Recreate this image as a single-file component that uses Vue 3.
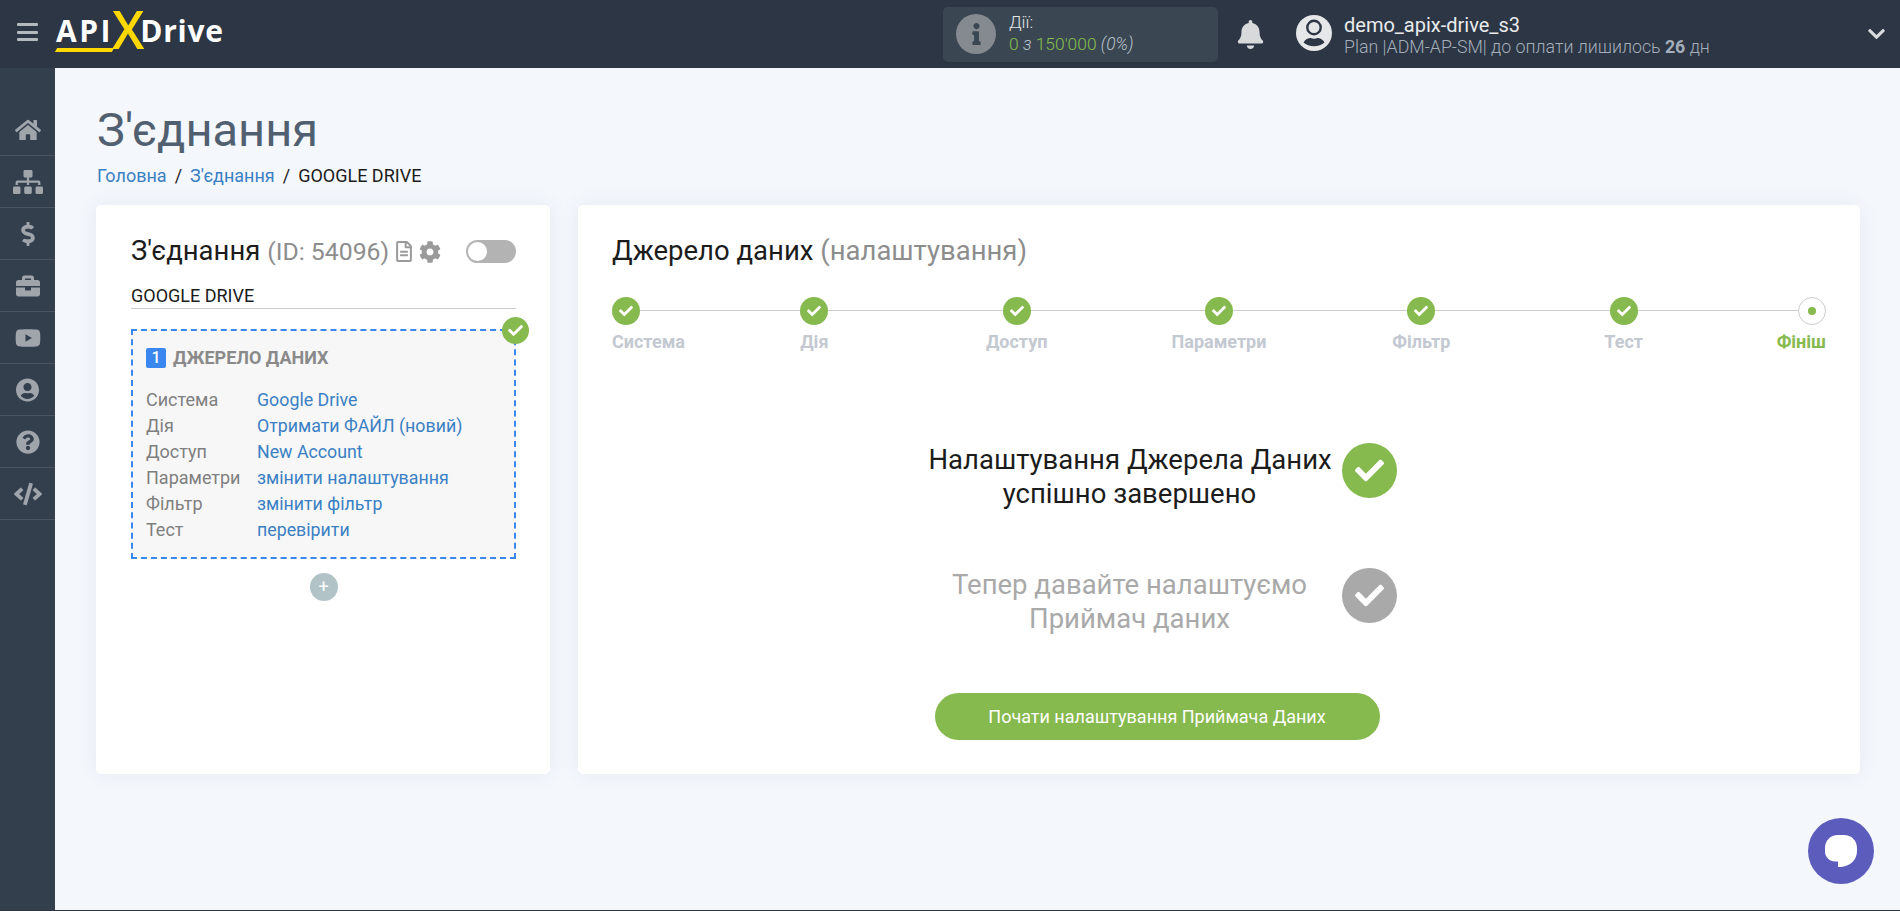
<script setup>
const paths = {
  home: ['0 0 576 512', 'M280.37 148.26L96 300.11V464a16 16 0 0 0 16 16l112.06-.29a16 16 0 0 0 15.92-16V368a16 16 0 0 1 16-16h64a16 16 0 0 1 16 16v95.64a16 16 0 0 0 16 16.05L464 480a16 16 0 0 0 16-16V300L295.67 148.26a12.19 12.19 0 0 0-15.3 0zM571.6 251.47L488 182.56V44.05a12 12 0 0 0-12-12h-56a12 12 0 0 0-12 12v72.61L318.47 43a48 48 0 0 0-61 0L4.34 251.47a12 12 0 0 0-1.6 16.9l25.5 31A12 12 0 0 0 45.15 301l235.22-193.74a12.19 12.19 0 0 1 15.3 0L530.9 301a12 12 0 0 0 16.9-1.6l25.5-31a12 12 0 0 0-1.7-16.93z'],
  sitemap: ['0 0 640 512', 'M128 352H32c-17.67 0-32 14.33-32 32v96c0 17.67 14.33 32 32 32h96c17.67 0 32-14.33 32-32v-96c0-17.67-14.33-32-32-32zm-24-80h192v48h48v-48h192v48h48v-57.59c0-21.17-17.23-38.41-38.41-38.41H344v-64h40c17.67 0 32-14.33 32-32V32c0-17.67-14.33-32-32-32H256c-17.67 0-32 14.33-32 32v96c0 17.67 14.33 32 32 32h40v64H94.41C73.23 224 56 241.23 56 262.41V320h48v-48zm264 80h-96c-17.67 0-32 14.33-32 32v96c0 17.67 14.33 32 32 32h96c17.67 0 32-14.33 32-32v-96c0-17.67-14.33-32-32-32zm240 0h-96c-17.67 0-32 14.33-32 32v96c0 17.67 14.33 32 32 32h96c17.67 0 32-14.33 32-32v-96c0-17.67-14.33-32-32-32z'],
  dollar: ['0 0 288 512', 'M209.2 233.4l-108-31.6C88.7 198.2 80 186.5 80 173.5c0-16.3 13.2-29.5 29.5-29.5h66.3c12.2 0 24.2 3.7 34.2 10.5 6.1 4.1 14.3 3.1 19.5-2l34.8-34c7.1-6.9 6.1-18.4-1.8-24.5C238 74.8 207.4 64.1 176 64V16c0-8.8-7.2-16-16-16h-32c-8.8 0-16 7.2-16 16v48h-2.5C45.8 64-5.4 118.7.5 183.6c4.2 46.1 39.4 83.6 83.8 96.6l102.5 30c12.5 3.7 21.2 15.3 21.2 28.3 0 16.3-13.2 29.5-29.5 29.5h-66.3C100 368 88 364.3 78 357.5c-6.1-4.1-14.3-3.1-19.5 2l-34.8 34c-7.1 6.9-6.1 18.4 1.8 24.5 24.5 19.2 55.1 29.9 86.5 30v48c0 8.8 7.2 16 16 16h32c8.8 0 16-7.2 16-16v-48.2c46.6-.9 90.3-28.6 105.7-72.7 21.5-61.6-14.6-124.8-72.5-141.7z'],
  briefcase: ['0 0 512 512', 'M320 336c0 8.84-7.16 16-16 16h-96c-8.84 0-16-7.16-16-16v-48H0v144c0 25.6 22.4 48 48 48h416c25.6 0 48-22.4 48-48V288H320v48zm144-208h-80V80c0-25.6-22.4-48-48-48H176c-25.6 0-48 22.4-48 48v48H48c-25.6 0-48 22.4-48 48v80h512v-80c0-25.6-22.4-48-48-48zm-144 0H192V96h128v32z'],
  youtube: ['0 0 576 512', 'M549.655 124.083c-6.281-23.65-24.787-42.276-48.284-48.597C458.781 64 288 64 288 64S117.22 64 74.629 75.486c-23.497 6.322-42.003 24.947-48.284 48.597-11.412 42.867-11.412 132.305-11.412 132.305s0 89.438 11.412 132.305c6.281 23.65 24.787 41.5 48.284 47.821C117.22 448 288 448 288 448s170.78 0 213.371-11.486c23.497-6.321 42.003-24.171 48.284-47.821 11.412-42.867 11.412-132.305 11.412-132.305s0-89.438-11.412-132.305zm-317.51 213.508V175.185l142.739 81.205-142.739 81.201z'],
  user: ['0 0 496 512', 'M248 8C111 8 0 119 0 256s111 248 248 248 248-111 248-248S385 8 248 8zm0 96c48.6 0 88 39.4 88 88s-39.4 88-88 88-88-39.4-88-88 39.4-88 88-88zm0 344c-58.7 0-111.3-26.6-146.5-68.2 18.8-35.4 55.6-59.8 98.5-59.8 2.4 0 4.8.4 7.1 1.1 13 4.2 26.6 6.9 40.9 6.9 14.3 0 28-2.7 40.9-6.9 2.3-.7 4.7-1.1 7.1-1.1 42.9 0 79.7 24.4 98.5 59.8C359.3 421.4 306.7 448 248 448z'],
  question: ['0 0 512 512', 'M504 256c0 136.997-111.043 248-248 248S8 392.997 8 256C8 119.083 119.043 8 256 8s248 111.083 248 248zM262.655 90c-54.497 0-89.255 22.957-116.549 63.758-3.536 5.286-2.353 12.415 2.715 16.258l34.699 26.31c5.205 3.947 12.621 3.008 16.665-2.122 17.864-22.658 30.113-35.797 57.303-35.797 20.429 0 45.698 13.148 45.698 32.958 0 14.976-12.363 22.667-32.534 33.976C247.128 238.528 216 254.941 216 296v4c0 6.627 5.373 12 12 12h56c6.627 0 12-5.373 12-12v-1.333c0-28.462 83.186-29.647 83.186-106.667 0-58.002-60.165-102-116.531-102zM256 338c-25.365 0-46 20.635-46 46 0 25.364 20.635 46 46 46s46-20.636 46-46c0-25.365-20.635-46-46-46z'],
  code: ['0 0 640 512', 'M278.9 511.5l-61-17.7c-6.4-1.8-10-8.5-8.2-14.9L346.2 8.7c1.8-6.4 8.5-10 14.9-8.2l61 17.7c6.4 1.8 10 8.5 8.2 14.9L293.8 503.3c-1.9 6.4-8.5 10.1-14.9 8.2zm-114-112.2l43.5-46.4c4.6-4.9 4.3-12.7-.8-17.2L117 256l90.6-79.7c5.1-4.5 5.5-12.3.8-17.2l-43.5-46.4c-4.5-4.8-12.1-5.1-17-.5L3.8 247.2c-5.1 4.7-5.1 12.8 0 17.5l144.1 135.1c4.9 4.6 12.5 4.4 17-.5zm327.2.6l144.1-135.1c5.1-4.7 5.1-12.8 0-17.5L492.1 112.1c-4.8-4.5-12.4-4.3-17 .5L431.6 159c-4.6 4.9-4.3 12.7.8 17.2L523 256l-90.6 79.7c-5.1 4.5-5.5 12.3-.8 17.2l43.5 46.4c4.5 4.9 12.1 5.1 17 .6z'],
  check: ['0 0 512 512', 'M173.898 439.404l-166.4-166.4c-9.997-9.997-9.997-26.206 0-36.204l36.203-36.204c9.997-9.998 26.207-9.998 36.204 0L192 312.69 432.095 72.596c9.997-9.997 26.207-9.997 36.204 0l36.203 36.204c9.997 9.997 9.997 26.206 0 36.204l-294.4 294.401c-9.998 9.997-26.207 9.997-36.204-.001z'],
  bell: ['0 0 448 512', 'M224 512c35.32 0 63.97-28.65 63.97-64H160.03c0 35.35 28.65 64 63.97 64zm215.39-149.71c-19.32-20.76-55.47-51.99-55.47-154.29 0-77.7-54.48-139.9-127.94-155.16V32c0-17.67-14.32-32-31.98-32s-31.98 14.33-31.98 32v20.84C118.56 68.1 64.08 130.3 64.08 208c0 102.3-36.15 133.53-55.47 154.29-6 6.45-8.66 14.16-8.61 21.71.11 16.4 12.98 32 32.1 32h383.8c19.12 0 32-15.6 32-32 .05-7.55-2.61-15.27-8.61-21.71z'],
  cog: ['0 0 512 512', 'M487.4 315.7l-42.6-24.6c4.3-23.2 4.3-47 0-70.2l42.6-24.6c4.9-2.8 7.1-8.6 5.5-14-11.1-35.6-30-67.8-54.7-94.6-3.8-4.1-10-5.1-14.8-2.3L380.8 110c-17.9-15.4-38.5-27.3-60.8-35.1V25.8c0-5.6-3.9-10.5-9.4-11.7-36.7-8.2-74.3-7.8-109.2 0-5.5 1.2-9.4 6.1-9.4 11.7V75c-22.2 7.9-42.8 19.8-60.8 35.1L88.7 85.5c-4.9-2.8-11-1.9-14.8 2.3-24.7 26.7-43.6 58.9-54.7 94.6-1.7 5.4.6 11.2 5.5 14L67.3 221c-4.3 23.2-4.3 47 0 70.2l-42.6 24.6c-4.9 2.8-7.1 8.6-5.5 14 11.1 35.6 30 67.8 54.7 94.6 3.8 4.1 10 5.1 14.8 2.3l42.6-24.6c17.9 15.4 38.5 27.3 60.8 35.1v49.2c0 5.6 3.9 10.5 9.4 11.7 36.7 8.2 74.3 7.8 109.2 0 5.5-1.2 9.4-6.1 9.4-11.7v-49.2c22.2-7.9 42.8-19.8 60.8-35.1l42.6 24.6c4.9 2.8 11 1.9 14.8-2.3 24.7-26.7 43.6-58.9 54.7-94.6 1.5-5.5-.7-11.3-5.6-14.1zM256 336c-44.1 0-80-35.9-80-80s35.9-80 80-80 80 35.9 80 80-35.9 80-80 80z'],
  file: ['0 0 384 512', 'M288 248v28c0 6.6-5.4 12-12 12H108c-6.6 0-12-5.4-12-12v-28c0-6.6 5.4-12 12-12h168c6.6 0 12 5.4 12 12zm-12 72H108c-6.6 0-12 5.4-12 12v28c0 6.6 5.4 12 12 12h168c6.6 0 12-5.4 12-12v-28c0-6.6-5.4-12-12-12zm108-188.1V464c0 26.5-21.5 48-48 48H48c-26.5 0-48-21.5-48-48V48C0 21.5 21.5 0 48 0h204.1C264.8 0 277 5.1 286 14.1L369.9 98c9 8.9 14.1 21.2 14.1 33.9zm-128-80V128h76.1L256 51.9zM336 464V176H232c-13.3 0-24-10.7-24-24V48H48v416h288z'],
  info: ['0 0 192 512', 'M20 424.229h20V279.771H20c-11.046 0-20-8.954-20-20V212c0-11.046 8.954-20 20-20h112c11.046 0 20 8.954 20 20v212.229h20c11.046 0 20 8.954 20 20V492c0 11.046-8.954 20-20 20H20c-11.046 0-20-8.954-20-20v-47.771c0-11.046 8.954-20 20-20zM96 0C56.235 0 24 32.235 24 72s32.235 72 72 72 72-32.235 72-72S135.764 0 96 0z'],
  chevron: ['0 0 448 512', 'M207.029 381.476L12.686 187.132c-9.373-9.373-9.373-24.569 0-33.941l22.667-22.667c9.357-9.357 24.522-9.375 33.901-.04L224 284.505l154.745-154.021c9.379-9.335 24.544-9.317 33.901.04l22.667 22.667c9.373 9.373 9.373 24.569 0 33.941L240.971 381.476c-9.373 9.372-24.569 9.372-33.942 0z']
}
const nav = [
  { name: 'home', w: 26 },
  { name: 'sitemap', w: 30 },
  { name: 'dollar', w: 14 },
  { name: 'briefcase', w: 24 },
  { name: 'youtube', w: 26 },
  { name: 'user', w: 23 },
  { name: 'question', w: 24 },
  { name: 'code', w: 28 }
]
const rows = [
  ['Система', 'Google Drive'],
  ['Дія', 'Отримати ФАЙЛ (новий)'],
  ['Доступ', 'New Account'],
  ['Параметри', 'змінити налаштування'],
  ['Фільтр', 'змінити фільтр'],
  ['Тест', 'перевірити']
]
const steps = ['Система', 'Дія', 'Доступ', 'Параметри', 'Фільтр', 'Тест']
</script>

<template>
  <div class="page">
    <header class="top">
      <button class="burger" aria-label="menu"><span></span><span></span><span></span></button>
      <div class="logo">
        <span class="api">API<i class="under"></i></span><span class="x">X</span><span class="drive">Drive</span>
      </div>
      <div class="actions">
        <div class="info-dot">
          <svg :viewBox="paths.info[0]" class="info-i"><path :d="paths.info[1]" /></svg>
        </div>
        <div class="actions-text">
          <div class="a-label">Дії:</div>
          <div class="a-val"><span class="green">0</span> <em>з</em> <span class="green">150'000</span> <em>(0%)</em></div>
        </div>
      </div>
      <svg :viewBox="paths.bell[0]" class="bell"><path :d="paths.bell[1]" /></svg>
      <svg viewBox="0 0 36 36" class="avatar">
        <circle cx="18" cy="18" r="18" class="av-bg" />
        <circle cx="18" cy="12.500" r="6.700" class="av-head" />
        <path d="M7.500 27.500c1.500-3.300 5-4.500 7-4.500 2.300.9 4.700.9 7 0 2 0 5.500 1.200 7 4.500-2.500 2.300-6.500 3.800-10.500 3.800s-8-1.500-10.500-3.800z" class="av-body" />
      </svg>
      <div class="account">
        <div class="acc-name">demo_apix-drive_s3</div>
        <div class="acc-plan">Plan |ADM-AP-SM| до оплати лишилось <b>26</b> дн</div>
      </div>
      <svg :viewBox="paths.chevron[0]" class="chev"><path :d="paths.chevron[1]" /></svg>
    </header>

    <div class="body">
      <nav class="side">
        <div v-for="n in nav" :key="n.name" class="side-item">
          <svg :viewBox="paths[n.name][0]" :style="{ width: n.w + 'px' }"><path :d="paths[n.name][1]" /></svg>
        </div>
      </nav>

      <main class="main">
        <h1 class="title">З'єднання</h1>
        <div class="crumbs">
          <a>Головна</a><span class="sl">/</span><a>З'єднання</a><span class="sl">/</span><span>GOOGLE DRIVE</span>
        </div>

        <div class="cards">
          <section class="card left">
            <div class="lhead">
              <h2 class="h2">З'єднання <span class="mut id">(ID: 54096)</span></h2>
              <svg :viewBox="paths.file[0]" class="ic-file"><path :d="paths.file[1]" /></svg>
              <svg :viewBox="paths.cog[0]" class="ic-cog"><path :d="paths.cog[1]" /></svg>
              <div class="toggle"><i></i></div>
            </div>
            <div class="name-input">GOOGLE DRIVE</div>
            <div class="box">
              <span class="box-ok">
                <svg :viewBox="paths.check[0]"><path :d="paths.check[1]" /></svg>
              </span>
              <div class="box-title"><span class="num">1</span>ДЖЕРЕЛО ДАНИХ</div>
              <div class="grid">
                <template v-for="r in rows" :key="r[0]">
                  <span class="k">{{ r[0] }}</span><a class="v">{{ r[1] }}</a>
                </template>
              </div>
            </div>
            <div class="plus">+</div>
          </section>

          <section class="card right">
            <h2 class="h2">Джерело даних <span class="mut">(налаштування)</span></h2>
            <div class="stepper">
              <div v-for="s in steps" :key="s" class="step">
                <span class="dot"><svg :viewBox="paths.check[0]"><path :d="paths.check[1]" /></svg></span>
                <span class="lab">{{ s }}</span>
              </div>
              <div class="step">
                <span class="dot cur"><i></i></span>
                <span class="lab fin">Фініш</span>
              </div>
            </div>

            <div class="done">
              <div class="msg">
                <p>Налаштування Джерела Даних<br />успішно завершено</p>
                <span class="big"><svg :viewBox="paths.check[0]"><path :d="paths.check[1]" /></svg></span>
              </div>
              <div class="msg next">
                <p>Тепер давайте налаштуємо<br />Приймач даних</p>
                <span class="big gray"><svg :viewBox="paths.check[0]"><path :d="paths.check[1]" /></svg></span>
              </div>
              <button class="cta">Почати налаштування Приймача Даних</button>
            </div>
          </section>
        </div>
      </main>
    </div>

    <div class="chat">
      <svg viewBox="0 0 32 32"><path d="M13 0h6c7.500 0 13 5.400 13 13v3c0 7-4 12-10 14.500-3 1.200-6 1.500-9 1.500v-5.500H10C4.500 26.500 0 22 0 16.500V13C0 5.400 5.500 0 13 0z" /></svg>
    </div>
  </div>
</template>

<style>
html, body { margin: 0; padding: 0; background: #f4f7fc; }
</style>

<style scoped>
.page {
  position: relative;
  height: 910px;
  border-bottom: 1px solid #2d3540;
  display: flex;
  flex-direction: column;
  font-family: Roboto, "Noto Sans", sans-serif;
  font-size: 16px;
  color: #1c1c1c;
  overflow: hidden;
}
.top {
  height: 68px;
  flex: none;
  background: #2c3644;
  display: flex;
  align-items: center;
  color: #fff;
}
.burger {
  width: 21px;
  height: 18px;
  margin: -4px 0 0 17px;
  padding: 0;
  border: 0;
  background: none;
  display: flex;
  flex-direction: column;
  justify-content: space-between;
}
.burger span { height: 3px; background: #b4b9bf; display: block; border-radius: 1px; }
.logo {
  margin-left: 18px;
  width: 170px;
  display: flex;
  align-items: baseline;
  font-family: "Open Sans", sans-serif;
  font-weight: 700;
  font-size: 30px;
  line-height: 1.4;
  color: #fff;
  position: relative;
  top: -10px;
  flex: none;
}
.api { position: relative; letter-spacing: 2.500px; }
.under {
  position: absolute;
  left: 0;
  right: 0;
  bottom: 0;
  height: 4px;
  background: #ffd800;
  transform: skewX(-30deg);
}
.x {
  color: #ffd800;
  font-size: 52px;
  font-weight: 600;
  line-height: 1;
  position: relative;
  top: 7px;
  margin: 0 -4px 0 -1px;
}
.drive { letter-spacing: .7px; }
.actions {
  margin-left: 717px;
  width: 275px;
  height: 55px;
  flex: none;
  background: #3a4651;
  border-radius: 5px;
  display: flex;
  align-items: center;
  box-sizing: border-box;
  padding-left: 13px;
}
.info-dot {
  width: 40px;
  height: 40px;
  border-radius: 50%;
  background: #848a8f;
  display: flex;
  align-items: center;
  justify-content: center;
  flex: none;
}
.info-i { height: 22px; width: 9px; fill: #3a4651; }
.actions-text { margin: -3px 0 0 13px; line-height: 22px; font-weight: 300; font-size: 17.4px; }
.a-label { color: #e3e6e9; }
.a-val { color: #b8c2cc; }
.green { color: #86c04b; }
.a-val em { font-style: italic; }
.bell { width: 27px; height: 29px; margin-left: 19px; fill: #d8d9da; flex: none; }
.avatar { width: 36px; height: 36px; margin-left: 32px; flex: none; position: relative; top: -1px; }
.av-bg { fill: #e6e7e8; }
.av-head { fill: #e6e7e8; stroke: #2c3644; stroke-width: 2.400; }
.av-body { fill: #2c3644; }
.account { margin-left: 12px; margin-top: 4px; flex: none; }
.acc-name { font-size: 20px; line-height: 22px; color: #e9ebed; }
.acc-plan { font-size: 17.8px; line-height: 22px; color: #a5afbb; font-weight: 300; }
.acc-plan b { font-weight: 700; }
.chev { width: 17px; height: 20px; fill: #d9dcdf; margin-left: auto; margin-right: 15px; flex: none; }

.body { flex: 1; display: flex; min-height: 0; }
.side {
  width: 55px;
  flex: none;
  background: #343f4e;
  padding-top: 36px;
  box-sizing: border-box;
}
.side-item {
  height: 52px;
  box-sizing: border-box;
  border-bottom: 1px solid #4a5462;
  display: flex;
  align-items: center;
  justify-content: center;
}
.side-item svg { height: 24px; fill: #a0a5ab; }

.main { flex: 1; padding: 0 40px 0 41px; min-width: 0; }
.title {
  margin: 36px 0 0 1px;
  font-size: 47px;
  line-height: 52px;
  font-weight: 400;
  color: #516070;
}
.crumbs {
  margin: 9px 0 0 1px;
  font-size: 18px;
  line-height: 22px;
  color: #1c1c1c;
  display: flex;
}
.crumbs a { color: #3a80c4; }
.sl { margin: 0 8px; }
.cards { display: flex; gap: 28px; margin-top: 18px; }
.card {
  background: #fff;
  height: 569px;
  border-radius: 5px;
  box-sizing: border-box;
  box-shadow: 0 0 20px rgba(60, 70, 100, .08);
}
.left { width: 454px; padding: 29px 34px 0 35px; flex: none; }
.right { flex: 1; padding: 29px 34px 0; }
.h2 { margin: 0; font-size: 27.5px; line-height: 34px; font-weight: 400; color: #1c1c1c; white-space: nowrap; }
.mut { color: #8d8d8d; }
.id { font-size: 24.800px; }
.lhead { display: flex; align-items: center; }
.ic-file { width: 16px; height: 21px; fill: #9a9a9a; margin-left: 7px; flex: none; }
.ic-cog { width: 22px; height: 22px; fill: #9a9a9a; margin-left: 7px; flex: none; }
.toggle {
  width: 50px;
  height: 23px;
  background: #b3b3b3;
  border-radius: 12px;
  margin-left: auto;
  flex: none;
  position: relative;
}
.toggle i {
  position: absolute;
  left: 2px;
  top: 2px;
  width: 19px;
  height: 19px;
  border-radius: 50%;
  background: #fff;
}
.name-input {
  margin-top: 16px;
  padding-bottom: 1px;
  border-bottom: 1px solid #ccc;
  font-size: 18px;
  line-height: 22px;
  color: #1c1c1c;
}
.box {
  position: relative;
  margin-top: 20px;
  height: 230px;
  box-sizing: border-box;
  border: 2px dashed #3b87f0;
  background: #f7f7f7;
  padding: 17px 13px 0;
}
.box-ok {
  position: absolute;
  right: -15px;
  top: -14px;
  width: 27px;
  height: 27px;
  border-radius: 50%;
  background: #86b94e;
  display: flex;
  align-items: center;
  justify-content: center;
}
.box-ok svg { width: 15px; height: 15px; fill: #fff; }
.box-title {
  display: flex;
  align-items: center;
  font-weight: 700;
  font-size: 18px;
  line-height: 20px;
  color: #8a8a8a;
}
.num {
  width: 20px;
  height: 20px;
  border-radius: 2px;
  background: #3b87f0;
  color: #fff;
  font-weight: 500;
  font-size: 16px;
  text-align: center;
  margin-right: 7px;
}
.grid {
  display: grid;
  grid-template-columns: 111px 1fr;
  grid-auto-rows: 26px;
  margin-top: 19px;
  line-height: 26px;
  font-size: 18px;
}
.k { color: #7f7f7f; }
.v { color: #3a80c4; white-space: nowrap; font-size: 17.800px; }
.plus {
  width: 28px;
  height: 28px;
  margin: 14px auto 0;
  border-radius: 50%;
  background: #b2c3c7;
  color: #fff;
  font-size: 18px;
  line-height: 27px;
  text-align: center;
}
.stepper {
  position: relative;
  display: flex;
  justify-content: space-between;
  margin-top: 29px;
}
.stepper::before {
  content: "";
  position: absolute;
  left: 14px;
  right: 14px;
  top: 13px;
  height: 1px;
  background: #ccc;
}
.step {
  width: 0;
  position: relative;
  display: flex;
  flex-direction: column;
  align-items: center;
}
.step:first-child { align-items: flex-start; }
.step:last-child { align-items: flex-end; }
.dot {
  width: 28px;
  height: 28px;
  flex: none;
  border-radius: 50%;
  background: #86b94e;
  display: flex;
  align-items: center;
  justify-content: center;
}
.dot svg { width: 14px; height: 14px; fill: #fff; }
.dot.cur { background: #fff; border: 1px solid #ccc; box-sizing: border-box; }
.dot.cur i { width: 8px; height: 8px; border-radius: 50%; background: #86b94e; }
.lab {
  margin-top: 7px;
  font-weight: 700;
  font-size: 18px;
  line-height: 20px;
  color: #c3c8d1;
  white-space: nowrap;
}
.lab.fin { color: #86b94e; }
.done { display: flex; flex-direction: column; align-items: center; margin-top: 77px; padding-right: 124px; }
.msg {
  display: flex;
  align-items: center;
  justify-content: center;
  gap: 11px;
  margin-left: 11px;
}
.msg p {
  margin: 0;
  padding-top: 14px;
  width: 402px;
  font-size: 27.5px;
  line-height: 34px;
  text-align: center;
  color: #1c1c1c;
  white-space: nowrap;
}
.next { margin-top: 43px; }
.next p { color: #a9a9a9; }
.big {
  width: 55px;
  height: 55px;
  flex: none;
  border-radius: 50%;
  background: #86b94e;
  display: flex;
  align-items: center;
  justify-content: center;
}
.big.gray { background: #a9a9a9; }
.big svg { width: 29px; height: 29px; fill: #fff; }
.cta {
  margin: 57px 0 0 0;
  width: 445px;
  height: 47px;
  border: 0;
  border-radius: 24px;
  background: #86b94e;
  color: #fff;
  font-family: inherit;
  font-size: 18px;
  font-weight: 400;
}
.chat {
  position: absolute;
  right: 26px;
  top: 818px;
  width: 66px;
  height: 66px;
  border-radius: 50%;
  background: #5c5cbd;
  display: flex;
  align-items: center;
  justify-content: center;
}
.chat svg { width: 32px; height: 32px; fill: #fff; }
</style>
